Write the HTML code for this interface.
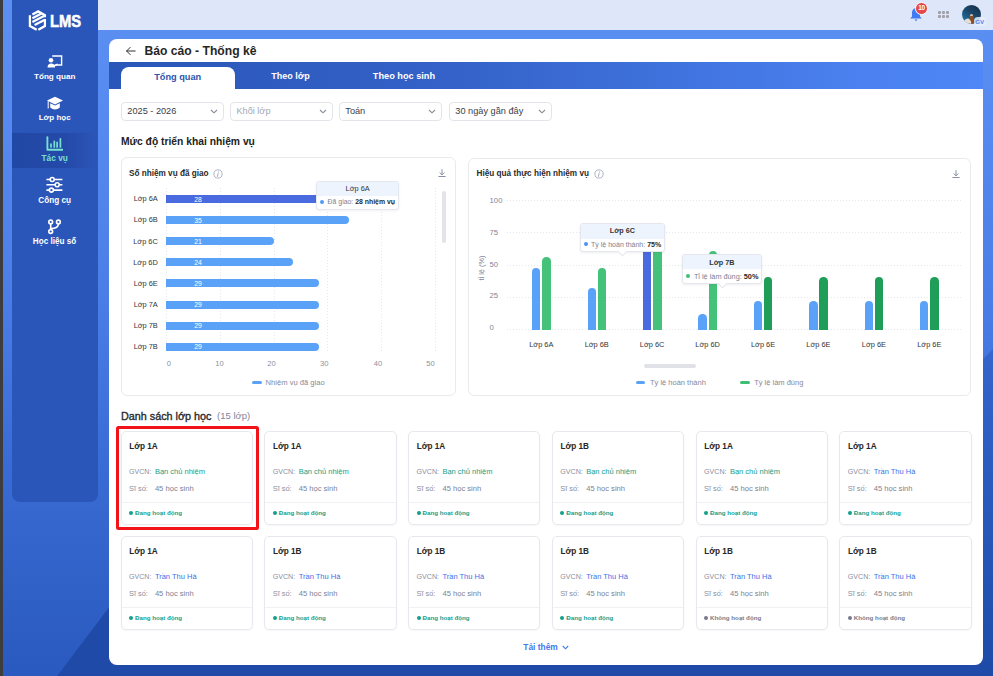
<!DOCTYPE html><html><head><meta charset="utf-8"><style>
*{box-sizing:border-box;margin:0;padding:0}
html,body{width:993px;height:676px;overflow:hidden}
body{font-family:"Liberation Sans",sans-serif;position:relative;background:#2f62c8}
.a{position:absolute}
.t{position:absolute;line-height:1;white-space:nowrap}
</style></head><body>
<div class="a" style="left:0;top:0;width:993px;height:676px;background:linear-gradient(180deg,#5c8ff1 0px,#578af0 120px,#4a7ee6 300px,#3a6dd6 450px,#2f60c6 600px,#2a5abf 676px)"></div>
<div class="a" style="left:0;top:0;width:993px;height:676px;background:linear-gradient(180deg,#3969d0 0,#3969d0 345px,#3464ca 362px,#2a59bd 500px,#2150ae 620px,#1f4aa7 676px);clip-path:polygon(993px 349px,993px 676px,666px 676px)"></div>
<div class="a" style="left:0;top:0;width:993px;height:676px;background:#1f4aa7;clip-path:polygon(57.2px 676px,122.9px 589px,982px 589px,982px 676px)"></div>
<div class="a" style="left:0;top:0;width:3px;height:676px;background:#3d3d3d"></div>
<div class="a" style="left:11.5px;top:0;width:86.5px;height:501.8px;background:#2b56b9;border-radius:0 0 8px 8px"></div>
<div class="a" style="left:98px;top:0;width:895px;height:30px;background:#dde7f9"></div>
<div class="a" style="left:108.5px;top:39px;width:874.9px;height:625.5px;background:#fff;border-radius:8px"></div>
<svg class="a" style="left:124px;top:45px" width="14" height="12" viewBox="0 0 14 12"><path d="M11.2 6H2.6M6.2 2.4L2.6 6L6.2 9.6" stroke="#333" stroke-width="1" fill="none" stroke-linecap="round" stroke-linejoin="round"/></svg>
<div class="t" style="left:144.50px;top:44.82px;font-size:12.15px;font-weight:bold;color:#262626;">Báo cáo - Thống kê</div>
<div class="a" style="left:108.5px;top:62px;width:874.9px;height:27px;background:linear-gradient(90deg,#2b56b9 0%,#3462c8 40%,#4a80ef 85%,#4f87f6 100%)"></div>
<div class="a" style="left:121px;top:66.5px;width:113.5px;height:22.5px;background:#fff;border-radius:8px 8px 0 0"></div>
<div class="t" style="left:177.70px;top:73.30px;font-size:9.2px;font-weight:bold;color:#2a55ad;transform:translateX(-50%);">Tổng quan</div>
<div class="t" style="left:271.30px;top:72.10px;font-size:9.0px;font-weight:bold;color:#fff;">Theo lớp</div>
<div class="t" style="left:372.80px;top:72.00px;font-size:9.2px;font-weight:bold;color:#fff;">Theo học sinh</div>
<div class="a" style="left:121.3px;top:101.8px;width:102.3px;height:19.4px;border:1px solid #e3e5ea;border-radius:4px"></div>
<div class="t" style="left:127.30px;top:107.10px;font-size:9.2px;font-weight:normal;color:#3a3d48;">2025 - 2026</div>
<svg class="a" style="left:210.3px;top:109px" width="8" height="5" viewBox="0 0 8 5"><path d="M1 1L4 3.8L7 1" stroke="#868b9c" stroke-width="1.15" fill="none"/></svg>
<div class="a" style="left:230.4px;top:101.8px;width:102.3px;height:19.4px;border:1px solid #e3e5ea;border-radius:4px"></div>
<div class="t" style="left:236.40px;top:107.10px;font-size:9.2px;font-weight:normal;color:#a3a7b4;">Khối lớp</div>
<svg class="a" style="left:319.4px;top:109px" width="8" height="5" viewBox="0 0 8 5"><path d="M1 1L4 3.8L7 1" stroke="#868b9c" stroke-width="1.15" fill="none"/></svg>
<div class="a" style="left:339.3px;top:101.8px;width:102.3px;height:19.4px;border:1px solid #e3e5ea;border-radius:4px"></div>
<div class="t" style="left:345.30px;top:107.10px;font-size:9.2px;font-weight:normal;color:#3a3d48;">Toán</div>
<svg class="a" style="left:428.3px;top:109px" width="8" height="5" viewBox="0 0 8 5"><path d="M1 1L4 3.8L7 1" stroke="#868b9c" stroke-width="1.15" fill="none"/></svg>
<div class="a" style="left:449.3px;top:101.8px;width:102.3px;height:19.4px;border:1px solid #e3e5ea;border-radius:4px"></div>
<div class="t" style="left:455.30px;top:107.10px;font-size:9.2px;font-weight:normal;color:#3a3d48;">30 ngày gần đây</div>
<svg class="a" style="left:538.3px;top:109px" width="8" height="5" viewBox="0 0 8 5"><path d="M1 1L4 3.8L7 1" stroke="#868b9c" stroke-width="1.15" fill="none"/></svg>
<div class="t" style="left:121.00px;top:137.05px;font-size:10.3px;font-weight:bold;color:#222;">Mức độ triển khai nhiệm vụ</div>
<div class="a" style="left:121.3px;top:157.4px;width:334.8px;height:239px;border:1px solid #e8eaee;border-radius:6px"></div>
<div class="t" style="left:129.00px;top:169.50px;font-size:8.2px;font-weight:bold;color:#2a2a2a;">Số nhiệm vụ đã giao</div>
<svg class="a" style="left:212.9px;top:168.9px" width="10" height="10" viewBox="0 0 10 10"><circle cx="5" cy="5" r="4.1" stroke="#9ea3b6" stroke-width="0.8" fill="none"/><circle cx="5.5" cy="3" r="0.5" fill="#8f95a8"/><path d="M4.4 7.4L5.1 4.6" stroke="#8f95a8" stroke-width="0.8" stroke-linecap="round"/></svg>
<svg class="a" style="left:436.5px;top:168.3px" width="10" height="10" viewBox="0 0 10 10"><path d="M5 1.3V6.8M2.6 4.5L5 6.9L7.4 4.5M1.4 8.5H8.6" stroke="#8a90a5" stroke-width="1" fill="none"/></svg>
<div class="a" style="left:166.1px;top:188px;width:1px;height:165px;background:repeating-linear-gradient(180deg,#e5e8ec 0 1.5px,transparent 1.5px 3px)"></div>
<div class="a" style="left:219.9px;top:188px;width:1px;height:165px;background:repeating-linear-gradient(180deg,#e5e8ec 0 1.5px,transparent 1.5px 3px)"></div>
<div class="a" style="left:273.6px;top:188px;width:1px;height:165px;background:repeating-linear-gradient(180deg,#e5e8ec 0 1.5px,transparent 1.5px 3px)"></div>
<div class="a" style="left:327.3px;top:188px;width:1px;height:165px;background:repeating-linear-gradient(180deg,#e5e8ec 0 1.5px,transparent 1.5px 3px)"></div>
<div class="a" style="left:381.0px;top:188px;width:1px;height:165px;background:repeating-linear-gradient(180deg,#e5e8ec 0 1.5px,transparent 1.5px 3px)"></div>
<div class="a" style="left:434.8px;top:188px;width:1px;height:165px;background:repeating-linear-gradient(180deg,#e5e8ec 0 1.5px,transparent 1.5px 3px)"></div>
<div class="a" style="left:441.5px;top:191.3px;width:4.3px;height:51.3px;background:#e2e4e9;border-radius:2px"></div>
<div class="a" style="left:166px;top:195.0px;width:152.0px;height:8px;background:#4a6be0;border-radius:0"></div>
<div class="t" style="left:157.80px;top:195.30px;font-size:7.4px;font-weight:normal;color:#333;transform:translateX(-100%);">Lớp 6A</div>
<div class="t" style="left:194.20px;top:196.70px;font-size:6.8px;font-weight:normal;color:#fff;">28</div>
<div class="a" style="left:166px;top:216.1px;width:182.7px;height:8px;background:#5aa2f8;border-radius:0 4px 4px 0"></div>
<div class="t" style="left:157.80px;top:216.40px;font-size:7.4px;font-weight:normal;color:#333;transform:translateX(-100%);">Lớp 6B</div>
<div class="t" style="left:194.20px;top:217.80px;font-size:6.8px;font-weight:normal;color:#fff;">35</div>
<div class="a" style="left:166px;top:237.2px;width:107.7px;height:8px;background:#5aa2f8;border-radius:0 4px 4px 0"></div>
<div class="t" style="left:157.80px;top:237.50px;font-size:7.4px;font-weight:normal;color:#333;transform:translateX(-100%);">Lớp 6C</div>
<div class="t" style="left:194.20px;top:238.90px;font-size:6.8px;font-weight:normal;color:#fff;">21</div>
<div class="a" style="left:166px;top:258.3px;width:126.7px;height:8px;background:#5aa2f8;border-radius:0 4px 4px 0"></div>
<div class="t" style="left:157.80px;top:258.60px;font-size:7.4px;font-weight:normal;color:#333;transform:translateX(-100%);">Lớp 6D</div>
<div class="t" style="left:194.20px;top:260.00px;font-size:6.8px;font-weight:normal;color:#fff;">24</div>
<div class="a" style="left:166px;top:279.4px;width:153.3px;height:8px;background:#5aa2f8;border-radius:0 4px 4px 0"></div>
<div class="t" style="left:157.80px;top:279.70px;font-size:7.4px;font-weight:normal;color:#333;transform:translateX(-100%);">Lớp 6E</div>
<div class="t" style="left:194.20px;top:281.10px;font-size:6.8px;font-weight:normal;color:#fff;">29</div>
<div class="a" style="left:166px;top:300.5px;width:153.3px;height:8px;background:#5aa2f8;border-radius:0 4px 4px 0"></div>
<div class="t" style="left:157.80px;top:300.80px;font-size:7.4px;font-weight:normal;color:#333;transform:translateX(-100%);">Lớp 7A</div>
<div class="t" style="left:194.20px;top:302.20px;font-size:6.8px;font-weight:normal;color:#fff;">29</div>
<div class="a" style="left:166px;top:321.6px;width:153.3px;height:8px;background:#5aa2f8;border-radius:0 4px 4px 0"></div>
<div class="t" style="left:157.80px;top:321.90px;font-size:7.4px;font-weight:normal;color:#333;transform:translateX(-100%);">Lớp 7B</div>
<div class="t" style="left:194.20px;top:323.30px;font-size:6.8px;font-weight:normal;color:#fff;">29</div>
<div class="a" style="left:166px;top:342.7px;width:153.3px;height:8px;background:#5aa2f8;border-radius:0 4px 4px 0"></div>
<div class="t" style="left:157.80px;top:343.00px;font-size:7.4px;font-weight:normal;color:#333;transform:translateX(-100%);">Lớp 7B</div>
<div class="t" style="left:194.20px;top:344.40px;font-size:6.8px;font-weight:normal;color:#fff;">29</div>
<div class="t" style="left:168.80px;top:359.60px;font-size:7.6px;font-weight:normal;color:#8b90a0;transform:translateX(-50%);">0</div>
<div class="t" style="left:219.40px;top:359.60px;font-size:7.6px;font-weight:normal;color:#8b90a0;transform:translateX(-50%);">10</div>
<div class="t" style="left:271.60px;top:359.60px;font-size:7.6px;font-weight:normal;color:#8b90a0;transform:translateX(-50%);">20</div>
<div class="t" style="left:324.20px;top:359.60px;font-size:7.6px;font-weight:normal;color:#8b90a0;transform:translateX(-50%);">30</div>
<div class="t" style="left:378.00px;top:359.60px;font-size:7.6px;font-weight:normal;color:#8b90a0;transform:translateX(-50%);">40</div>
<div class="t" style="left:430.60px;top:359.60px;font-size:7.6px;font-weight:normal;color:#8b90a0;transform:translateX(-50%);">50</div>
<div class="a" style="left:251.6px;top:380.8px;width:10px;height:3px;background:#5aa2f8;border-radius:2px"></div>
<div class="t" style="left:265.60px;top:378.50px;font-size:7.6px;font-weight:normal;color:#858a9a;">Nhiệm vụ đã giao</div>
<div class="a" style="left:316.3px;top:181.3px;width:83px;height:29px;background:#fff;border:1px solid #e4e7ee;border-radius:3px;box-shadow:0 1px 3px rgba(0,0,0,.06);overflow:hidden"><div style="height:14px;background:#edf4fe"></div></div>
<div class="t" style="left:357.70px;top:185.30px;font-size:7.4px;font-weight:normal;color:#333;transform:translateX(-50%);">Lớp 6A</div>
<div class="a" style="left:320px;top:200.3px;width:4px;height:4px;border-radius:50%;background:#4f9cf7"></div>
<div class="t" style="left:327.6px;top:198.8px;font-size:6.9px;color:#7c8191">Đã giao: <b style="color:#2a2a2a">28 nhiệm vụ</b></div>
<div class="a" style="left:468.3px;top:157.6px;width:502.3px;height:238.6px;border:1px solid #e8eaee;border-radius:6px"></div>
<div class="t" style="left:476.60px;top:169.50px;font-size:8.2px;font-weight:bold;color:#2a2a2a;">Hiệu quả thực hiện nhiệm vụ</div>
<svg class="a" style="left:593.8px;top:169.0px" width="10" height="10" viewBox="0 0 10 10"><circle cx="5" cy="5" r="4.1" stroke="#9ea3b6" stroke-width="0.8" fill="none"/><circle cx="5.5" cy="3" r="0.5" fill="#8f95a8"/><path d="M4.4 7.4L5.1 4.6" stroke="#8f95a8" stroke-width="0.8" stroke-linecap="round"/></svg>
<svg class="a" style="left:951.3px;top:169px" width="10" height="10" viewBox="0 0 10 10"><path d="M5 1.3V6.8M2.6 4.5L5 6.9L7.4 4.5M1.4 8.5H8.6" stroke="#8a90a5" stroke-width="1" fill="none"/></svg>
<div class="a" style="left:507px;top:200.2px;width:456px;height:1px;background:repeating-linear-gradient(90deg,#e5e8ec 0 1.5px,transparent 1.5px 3px)"></div>
<div class="t" style="left:489.60px;top:197.15px;font-size:7.7px;font-weight:normal;color:#80859a;">100</div>
<div class="a" style="left:507px;top:232.4px;width:456px;height:1px;background:repeating-linear-gradient(90deg,#e5e8ec 0 1.5px,transparent 1.5px 3px)"></div>
<div class="t" style="left:489.60px;top:228.85px;font-size:7.7px;font-weight:normal;color:#80859a;">75</div>
<div class="a" style="left:507px;top:264.6px;width:456px;height:1px;background:repeating-linear-gradient(90deg,#e5e8ec 0 1.5px,transparent 1.5px 3px)"></div>
<div class="t" style="left:489.60px;top:260.55px;font-size:7.7px;font-weight:normal;color:#80859a;">50</div>
<div class="a" style="left:507px;top:296.8px;width:456px;height:1px;background:repeating-linear-gradient(90deg,#e5e8ec 0 1.5px,transparent 1.5px 3px)"></div>
<div class="t" style="left:489.60px;top:292.25px;font-size:7.7px;font-weight:normal;color:#80859a;">25</div>
<div class="a" style="left:507px;top:329.1px;width:456px;height:1px;background:repeating-linear-gradient(90deg,#e5e8ec 0 1.5px,transparent 1.5px 3px)"></div>
<div class="t" style="left:489.60px;top:323.95px;font-size:7.7px;font-weight:normal;color:#80859a;">0</div>
<div class="t" style="left:482.2px;top:268px;font-size:7.4px;color:#858a9c;transform:translate(-50%,-50%) rotate(-90deg)">tỉ lệ (%)</div>
<div class="a" style="left:532.1px;top:268.3px;width:8.4px;height:61.3px;background:#5aa2f8;border-radius:4.2px 4.2px 0 0"></div>
<div class="a" style="left:542.2px;top:257px;width:8.6px;height:72.6px;background:#45c27a;border-radius:4.3px 4.3px 0 0"></div>
<div class="t" style="left:541.30px;top:341.00px;font-size:7.4px;font-weight:normal;color:#333;transform:translateX(-50%);">Lớp 6A</div>
<div class="a" style="left:587.5px;top:288.4px;width:8.4px;height:41.2px;background:#5aa2f8;border-radius:4.2px 4.2px 0 0"></div>
<div class="a" style="left:597.6px;top:267.8px;width:8.6px;height:61.8px;background:#45c27a;border-radius:4.3px 4.3px 0 0"></div>
<div class="t" style="left:596.73px;top:341.00px;font-size:7.4px;font-weight:normal;color:#333;transform:translateX(-50%);">Lớp 6B</div>
<div class="a" style="left:643.0px;top:240px;width:8.4px;height:89.6px;background:#4a6be0;border-radius:0"></div>
<div class="a" style="left:653.1px;top:240px;width:8.6px;height:89.6px;background:#45c27a;border-radius:0"></div>
<div class="t" style="left:652.16px;top:341.00px;font-size:7.4px;font-weight:normal;color:#333;transform:translateX(-50%);">Lớp 6C</div>
<div class="a" style="left:698.4px;top:314.1px;width:8.4px;height:15.5px;background:#5aa2f8;border-radius:4.2px 4.2px 0 0"></div>
<div class="a" style="left:708.5px;top:250.5px;width:8.6px;height:79.1px;background:#45c27a;border-radius:4.3px 4.3px 0 0"></div>
<div class="t" style="left:707.59px;top:341.00px;font-size:7.4px;font-weight:normal;color:#333;transform:translateX(-50%);">Lớp 6D</div>
<div class="a" style="left:753.8px;top:301px;width:8.4px;height:28.6px;background:#5aa2f8;border-radius:4.2px 4.2px 0 0"></div>
<div class="a" style="left:763.9px;top:277.2px;width:8.6px;height:52.4px;background:#1e9e58;border-radius:4.3px 4.3px 0 0"></div>
<div class="t" style="left:763.02px;top:341.00px;font-size:7.4px;font-weight:normal;color:#333;transform:translateX(-50%);">Lớp 6E</div>
<div class="a" style="left:809.2px;top:301px;width:8.4px;height:28.6px;background:#5aa2f8;border-radius:4.2px 4.2px 0 0"></div>
<div class="a" style="left:819.4px;top:277.2px;width:8.6px;height:52.4px;background:#1e9e58;border-radius:4.3px 4.3px 0 0"></div>
<div class="t" style="left:818.45px;top:341.00px;font-size:7.4px;font-weight:normal;color:#333;transform:translateX(-50%);">Lớp 6E</div>
<div class="a" style="left:864.7px;top:301px;width:8.4px;height:28.6px;background:#5aa2f8;border-radius:4.2px 4.2px 0 0"></div>
<div class="a" style="left:874.8px;top:277.2px;width:8.6px;height:52.4px;background:#1e9e58;border-radius:4.3px 4.3px 0 0"></div>
<div class="t" style="left:873.88px;top:341.00px;font-size:7.4px;font-weight:normal;color:#333;transform:translateX(-50%);">Lớp 6E</div>
<div class="a" style="left:920.1px;top:301px;width:8.4px;height:28.6px;background:#5aa2f8;border-radius:4.2px 4.2px 0 0"></div>
<div class="a" style="left:930.2px;top:277.2px;width:8.6px;height:52.4px;background:#1e9e58;border-radius:4.3px 4.3px 0 0"></div>
<div class="t" style="left:929.31px;top:341.00px;font-size:7.4px;font-weight:normal;color:#333;transform:translateX(-50%);">Lớp 6E</div>
<div class="a" style="left:644px;top:364.2px;width:51.7px;height:4px;background:#e0e2e7;border-radius:2px"></div>
<div class="a" style="left:635.7px;top:380.7px;width:9.7px;height:3px;background:#5aa2f8;border-radius:2px"></div>
<div class="t" style="left:650.00px;top:378.55px;font-size:7.5px;font-weight:normal;color:#858a9a;">Tỷ lệ hoàn thành</div>
<div class="a" style="left:740.3px;top:380.7px;width:9.7px;height:3px;background:#3fbf74;border-radius:2px"></div>
<div class="t" style="left:754.20px;top:378.55px;font-size:7.5px;font-weight:normal;color:#858a9a;">Tỷ lệ làm đúng</div>
<div class="a" style="left:579.6px;top:223.3px;width:85.8px;height:28.6px;background:#fff;border:1px solid #e4e7ee;border-radius:3px;box-shadow:0 1px 3px rgba(0,0,0,.07);overflow:hidden"><div style="height:14.4px;background:#edf4fe"></div></div>
<div class="a" style="left:618.8px;top:248.4px;width:7px;height:7px;background:#fff;transform:rotate(45deg);border-right:1px solid #e4e7ee;border-bottom:1px solid #e4e7ee"></div>
<div class="t" style="left:622.30px;top:227.00px;font-size:7.2px;font-weight:bold;color:#333;transform:translateX(-50%);">Lớp 6C</div>
<div class="a" style="left:583.6px;top:242.1px;width:4px;height:4px;border-radius:50%;background:#4f8ff7"></div>
<div class="t" style="left:591.1px;top:240.8px;font-size:7px;color:#7c8191">Tỷ lệ hoàn thành: <b style="color:#2a2a2a">75%</b></div>
<div class="a" style="left:682.4px;top:254.1px;width:79.2px;height:29.5px;background:#fff;border:1px solid #e4e7ee;border-radius:3px;box-shadow:0 1px 3px rgba(0,0,0,.07);overflow:hidden"><div style="height:14.4px;background:#edf4fe"></div></div>
<div class="a" style="left:718.5px;top:280.1px;width:7px;height:7px;background:#fff;transform:rotate(45deg);border-right:1px solid #e4e7ee;border-bottom:1px solid #e4e7ee"></div>
<div class="t" style="left:721.80px;top:258.50px;font-size:7.2px;font-weight:bold;color:#333;transform:translateX(-50%);">Lớp 7B</div>
<div class="a" style="left:686.4px;top:273.8px;width:4px;height:4px;border-radius:50%;background:#3fbf74"></div>
<div class="t" style="left:693.9px;top:272.5px;font-size:7.3px;color:#7c8191">Tỉ lệ làm đúng: <b style="color:#2a2a2a">50%</b></div>
<div class="t" style="left:121.00px;top:410.80px;font-size:10.8px;font-weight:normal;color:#2a2a2a;-webkit-text-stroke:0.35px #2a2a2a">Danh sách lớp học</div>
<div class="t" style="left:217.10px;top:411.35px;font-size:9.5px;font-weight:normal;color:#7f83a0;">(15 lớp)</div>
<div class="a" style="left:120.6px;top:431.4px;width:132.2px;height:93.6px;border:1px solid #e6e8ed;border-radius:5px;box-shadow:0 1px 2px rgba(20,30,60,.04)"></div>
<div class="a" style="left:121.6px;top:502.2px;width:130.2px;height:1px;background:#f0f1f4"></div>
<div class="t" style="left:129.20px;top:442.70px;font-size:8.2px;font-weight:bold;color:#262626;">Lớp 1A</div>
<div class="t" style="left:129.00px;top:468.85px;font-size:7.1px;font-weight:normal;color:#8a8ea0;">GVCN:</div>
<div class="t" style="left:154.90px;top:467.95px;font-size:7.5px;font-weight:normal;color:#16a08a;">Bạn chủ nhiệm</div>
<div class="t" style="left:129.00px;top:484.90px;font-size:7.4px;font-weight:normal;color:#8a8ea0;">Sĩ số:</div>
<div class="t" style="left:154.90px;top:484.80px;font-size:7.6px;font-weight:normal;color:#7d8192;">45 học sinh</div>
<div class="a" style="left:129px;top:511px;width:4px;height:4px;border-radius:50%;background:#14a08b"></div>
<div class="t" style="left:135.00px;top:510.30px;font-size:6.2px;font-weight:bold;color:#14a08b;">Đang hoạt động</div>
<div class="a" style="left:264.4px;top:431.4px;width:132.2px;height:93.6px;border:1px solid #e6e8ed;border-radius:5px;box-shadow:0 1px 2px rgba(20,30,60,.04)"></div>
<div class="a" style="left:265.4px;top:502.2px;width:130.2px;height:1px;background:#f0f1f4"></div>
<div class="t" style="left:272.96px;top:442.70px;font-size:8.2px;font-weight:bold;color:#262626;">Lớp 1A</div>
<div class="t" style="left:272.76px;top:468.85px;font-size:7.1px;font-weight:normal;color:#8a8ea0;">GVCN:</div>
<div class="t" style="left:298.66px;top:467.95px;font-size:7.5px;font-weight:normal;color:#16a08a;">Bạn chủ nhiệm</div>
<div class="t" style="left:272.76px;top:484.90px;font-size:7.4px;font-weight:normal;color:#8a8ea0;">Sĩ số:</div>
<div class="t" style="left:298.66px;top:484.80px;font-size:7.6px;font-weight:normal;color:#7d8192;">45 học sinh</div>
<div class="a" style="left:273px;top:511px;width:4px;height:4px;border-radius:50%;background:#14a08b"></div>
<div class="t" style="left:278.76px;top:510.30px;font-size:6.2px;font-weight:bold;color:#14a08b;">Đang hoạt động</div>
<div class="a" style="left:408.1px;top:431.4px;width:132.2px;height:93.6px;border:1px solid #e6e8ed;border-radius:5px;box-shadow:0 1px 2px rgba(20,30,60,.04)"></div>
<div class="a" style="left:409.1px;top:502.2px;width:130.2px;height:1px;background:#f0f1f4"></div>
<div class="t" style="left:416.72px;top:442.70px;font-size:8.2px;font-weight:bold;color:#262626;">Lớp 1A</div>
<div class="t" style="left:416.52px;top:468.85px;font-size:7.1px;font-weight:normal;color:#8a8ea0;">GVCN:</div>
<div class="t" style="left:442.42px;top:467.95px;font-size:7.5px;font-weight:normal;color:#16a08a;">Bạn chủ nhiệm</div>
<div class="t" style="left:416.52px;top:484.90px;font-size:7.4px;font-weight:normal;color:#8a8ea0;">Sĩ số:</div>
<div class="t" style="left:442.42px;top:484.80px;font-size:7.6px;font-weight:normal;color:#7d8192;">45 học sinh</div>
<div class="a" style="left:417px;top:511px;width:4px;height:4px;border-radius:50%;background:#14a08b"></div>
<div class="t" style="left:422.52px;top:510.30px;font-size:6.2px;font-weight:bold;color:#14a08b;">Đang hoạt động</div>
<div class="a" style="left:551.9px;top:431.4px;width:132.2px;height:93.6px;border:1px solid #e6e8ed;border-radius:5px;box-shadow:0 1px 2px rgba(20,30,60,.04)"></div>
<div class="a" style="left:552.9px;top:502.2px;width:130.2px;height:1px;background:#f0f1f4"></div>
<div class="t" style="left:560.48px;top:442.70px;font-size:8.2px;font-weight:bold;color:#262626;">Lớp 1B</div>
<div class="t" style="left:560.28px;top:468.85px;font-size:7.1px;font-weight:normal;color:#8a8ea0;">GVCN:</div>
<div class="t" style="left:586.18px;top:467.95px;font-size:7.5px;font-weight:normal;color:#16a08a;">Bạn chủ nhiệm</div>
<div class="t" style="left:560.28px;top:484.90px;font-size:7.4px;font-weight:normal;color:#8a8ea0;">Sĩ số:</div>
<div class="t" style="left:586.18px;top:484.80px;font-size:7.6px;font-weight:normal;color:#7d8192;">45 học sinh</div>
<div class="a" style="left:560px;top:511px;width:4px;height:4px;border-radius:50%;background:#14a08b"></div>
<div class="t" style="left:566.28px;top:510.30px;font-size:6.2px;font-weight:bold;color:#14a08b;">Đang hoạt động</div>
<div class="a" style="left:695.6px;top:431.4px;width:132.2px;height:93.6px;border:1px solid #e6e8ed;border-radius:5px;box-shadow:0 1px 2px rgba(20,30,60,.04)"></div>
<div class="a" style="left:696.6px;top:502.2px;width:130.2px;height:1px;background:#f0f1f4"></div>
<div class="t" style="left:704.24px;top:442.70px;font-size:8.2px;font-weight:bold;color:#262626;">Lớp 1A</div>
<div class="t" style="left:704.04px;top:468.85px;font-size:7.1px;font-weight:normal;color:#8a8ea0;">GVCN:</div>
<div class="t" style="left:729.94px;top:467.95px;font-size:7.5px;font-weight:normal;color:#16a08a;">Bạn chủ nhiệm</div>
<div class="t" style="left:704.04px;top:484.90px;font-size:7.4px;font-weight:normal;color:#8a8ea0;">Sĩ số:</div>
<div class="t" style="left:729.94px;top:484.80px;font-size:7.6px;font-weight:normal;color:#7d8192;">45 học sinh</div>
<div class="a" style="left:704px;top:511px;width:4px;height:4px;border-radius:50%;background:#14a08b"></div>
<div class="t" style="left:710.04px;top:510.30px;font-size:6.2px;font-weight:bold;color:#14a08b;">Đang hoạt động</div>
<div class="a" style="left:839.4px;top:431.4px;width:132.2px;height:93.6px;border:1px solid #e6e8ed;border-radius:5px;box-shadow:0 1px 2px rgba(20,30,60,.04)"></div>
<div class="a" style="left:840.4px;top:502.2px;width:130.2px;height:1px;background:#f0f1f4"></div>
<div class="t" style="left:848.00px;top:442.70px;font-size:8.2px;font-weight:bold;color:#262626;">Lớp 1A</div>
<div class="t" style="left:847.80px;top:468.85px;font-size:7.1px;font-weight:normal;color:#8a8ea0;">GVCN:</div>
<div class="t" style="left:873.70px;top:467.95px;font-size:7.5px;font-weight:normal;color:#3c72e6;">Trần Thu Hà</div>
<div class="t" style="left:847.80px;top:484.90px;font-size:7.4px;font-weight:normal;color:#8a8ea0;">Sĩ số:</div>
<div class="t" style="left:873.70px;top:484.80px;font-size:7.6px;font-weight:normal;color:#7d8192;">45 học sinh</div>
<div class="a" style="left:848px;top:511px;width:4px;height:4px;border-radius:50%;background:#14a08b"></div>
<div class="t" style="left:853.80px;top:510.30px;font-size:6.2px;font-weight:bold;color:#14a08b;">Đang hoạt động</div>
<div class="a" style="left:120.6px;top:536.2px;width:132.2px;height:93.6px;border:1px solid #e6e8ed;border-radius:5px;box-shadow:0 1px 2px rgba(20,30,60,.04)"></div>
<div class="a" style="left:121.6px;top:607.0px;width:130.2px;height:1px;background:#f0f1f4"></div>
<div class="t" style="left:129.20px;top:547.50px;font-size:8.2px;font-weight:bold;color:#262626;">Lớp 1A</div>
<div class="t" style="left:129.00px;top:573.65px;font-size:7.1px;font-weight:normal;color:#8a8ea0;">GVCN:</div>
<div class="t" style="left:154.90px;top:572.75px;font-size:7.5px;font-weight:normal;color:#3c72e6;">Trần Thu Hà</div>
<div class="t" style="left:129.00px;top:589.70px;font-size:7.4px;font-weight:normal;color:#8a8ea0;">Sĩ số:</div>
<div class="t" style="left:154.90px;top:589.60px;font-size:7.6px;font-weight:normal;color:#7d8192;">45 học sinh</div>
<div class="a" style="left:129px;top:616px;width:4px;height:4px;border-radius:50%;background:#14a08b"></div>
<div class="t" style="left:135.00px;top:615.10px;font-size:6.2px;font-weight:bold;color:#14a08b;">Đang hoạt động</div>
<div class="a" style="left:264.4px;top:536.2px;width:132.2px;height:93.6px;border:1px solid #e6e8ed;border-radius:5px;box-shadow:0 1px 2px rgba(20,30,60,.04)"></div>
<div class="a" style="left:265.4px;top:607.0px;width:130.2px;height:1px;background:#f0f1f4"></div>
<div class="t" style="left:272.96px;top:547.50px;font-size:8.2px;font-weight:bold;color:#262626;">Lớp 1B</div>
<div class="t" style="left:272.76px;top:573.65px;font-size:7.1px;font-weight:normal;color:#8a8ea0;">GVCN:</div>
<div class="t" style="left:298.66px;top:572.75px;font-size:7.5px;font-weight:normal;color:#3c72e6;">Trần Thu Hà</div>
<div class="t" style="left:272.76px;top:589.70px;font-size:7.4px;font-weight:normal;color:#8a8ea0;">Sĩ số:</div>
<div class="t" style="left:298.66px;top:589.60px;font-size:7.6px;font-weight:normal;color:#7d8192;">45 học sinh</div>
<div class="a" style="left:273px;top:616px;width:4px;height:4px;border-radius:50%;background:#14a08b"></div>
<div class="t" style="left:278.76px;top:615.10px;font-size:6.2px;font-weight:bold;color:#14a08b;">Đang hoạt động</div>
<div class="a" style="left:408.1px;top:536.2px;width:132.2px;height:93.6px;border:1px solid #e6e8ed;border-radius:5px;box-shadow:0 1px 2px rgba(20,30,60,.04)"></div>
<div class="a" style="left:409.1px;top:607.0px;width:130.2px;height:1px;background:#f0f1f4"></div>
<div class="t" style="left:416.72px;top:547.50px;font-size:8.2px;font-weight:bold;color:#262626;">Lớp 1B</div>
<div class="t" style="left:416.52px;top:573.65px;font-size:7.1px;font-weight:normal;color:#8a8ea0;">GVCN:</div>
<div class="t" style="left:442.42px;top:572.75px;font-size:7.5px;font-weight:normal;color:#3c72e6;">Trần Thu Hà</div>
<div class="t" style="left:416.52px;top:589.70px;font-size:7.4px;font-weight:normal;color:#8a8ea0;">Sĩ số:</div>
<div class="t" style="left:442.42px;top:589.60px;font-size:7.6px;font-weight:normal;color:#7d8192;">45 học sinh</div>
<div class="a" style="left:417px;top:616px;width:4px;height:4px;border-radius:50%;background:#14a08b"></div>
<div class="t" style="left:422.52px;top:615.10px;font-size:6.2px;font-weight:bold;color:#14a08b;">Đang hoạt động</div>
<div class="a" style="left:551.9px;top:536.2px;width:132.2px;height:93.6px;border:1px solid #e6e8ed;border-radius:5px;box-shadow:0 1px 2px rgba(20,30,60,.04)"></div>
<div class="a" style="left:552.9px;top:607.0px;width:130.2px;height:1px;background:#f0f1f4"></div>
<div class="t" style="left:560.48px;top:547.50px;font-size:8.2px;font-weight:bold;color:#262626;">Lớp 1B</div>
<div class="t" style="left:560.28px;top:573.65px;font-size:7.1px;font-weight:normal;color:#8a8ea0;">GVCN:</div>
<div class="t" style="left:586.18px;top:572.75px;font-size:7.5px;font-weight:normal;color:#3c72e6;">Trần Thu Hà</div>
<div class="t" style="left:560.28px;top:589.70px;font-size:7.4px;font-weight:normal;color:#8a8ea0;">Sĩ số:</div>
<div class="t" style="left:586.18px;top:589.60px;font-size:7.6px;font-weight:normal;color:#7d8192;">45 học sinh</div>
<div class="a" style="left:560px;top:616px;width:4px;height:4px;border-radius:50%;background:#14a08b"></div>
<div class="t" style="left:566.28px;top:615.10px;font-size:6.2px;font-weight:bold;color:#14a08b;">Đang hoạt động</div>
<div class="a" style="left:695.6px;top:536.2px;width:132.2px;height:93.6px;border:1px solid #e6e8ed;border-radius:5px;box-shadow:0 1px 2px rgba(20,30,60,.04)"></div>
<div class="a" style="left:696.6px;top:607.0px;width:130.2px;height:1px;background:#f0f1f4"></div>
<div class="t" style="left:704.24px;top:547.50px;font-size:8.2px;font-weight:bold;color:#262626;">Lớp 1B</div>
<div class="t" style="left:704.04px;top:573.65px;font-size:7.1px;font-weight:normal;color:#8a8ea0;">GVCN:</div>
<div class="t" style="left:729.94px;top:572.75px;font-size:7.5px;font-weight:normal;color:#3c72e6;">Trần Thu Hà</div>
<div class="t" style="left:704.04px;top:589.70px;font-size:7.4px;font-weight:normal;color:#8a8ea0;">Sĩ số:</div>
<div class="t" style="left:729.94px;top:589.60px;font-size:7.6px;font-weight:normal;color:#7d8192;">45 học sinh</div>
<div class="a" style="left:704px;top:616px;width:4px;height:4px;border-radius:50%;background:#777b8c"></div>
<div class="t" style="left:710.04px;top:615.10px;font-size:6.2px;font-weight:bold;color:#777b8c;">Không hoạt động</div>
<div class="a" style="left:839.4px;top:536.2px;width:132.2px;height:93.6px;border:1px solid #e6e8ed;border-radius:5px;box-shadow:0 1px 2px rgba(20,30,60,.04)"></div>
<div class="a" style="left:840.4px;top:607.0px;width:130.2px;height:1px;background:#f0f1f4"></div>
<div class="t" style="left:848.00px;top:547.50px;font-size:8.2px;font-weight:bold;color:#262626;">Lớp 1B</div>
<div class="t" style="left:847.80px;top:573.65px;font-size:7.1px;font-weight:normal;color:#8a8ea0;">GVCN:</div>
<div class="t" style="left:873.70px;top:572.75px;font-size:7.5px;font-weight:normal;color:#3c72e6;">Trần Thu Hà</div>
<div class="t" style="left:847.80px;top:589.70px;font-size:7.4px;font-weight:normal;color:#8a8ea0;">Sĩ số:</div>
<div class="t" style="left:873.70px;top:589.60px;font-size:7.6px;font-weight:normal;color:#7d8192;">45 học sinh</div>
<div class="a" style="left:848px;top:616px;width:4px;height:4px;border-radius:50%;background:#777b8c"></div>
<div class="t" style="left:853.80px;top:615.10px;font-size:6.2px;font-weight:bold;color:#777b8c;">Không hoạt động</div>
<div class="a" style="left:116.4px;top:426.2px;width:142.2px;height:104px;border:3px solid #f2121a;border-radius:2.5px"></div>
<div class="t" style="left:523.30px;top:642.70px;font-size:8.4px;font-weight:bold;color:#4479ec;">Tải thêm</div>
<svg class="a" style="left:562px;top:644.5px" width="7" height="5" viewBox="0 0 7 5"><path d="M0.8 1L3.5 3.8L6.2 1" stroke="#4479ec" stroke-width="1.1" fill="none"/></svg>
<svg class="a" style="left:26px;top:9px" width="24" height="24" viewBox="0 0 24 24">
<g fill="none" stroke="#fff" stroke-width="2.25" stroke-linejoin="miter" stroke-linecap="butt">
<path d="M3.9 6.3V17.1L10.7 20.8"/>
<path d="M12.3 20.8L18.9 17V10"/>
<path d="M6.4 5.5L12.2 2.4L18.9 6.2V8.2"/>
<path d="M6.4 9.2L15.4 4.5"/>
<path d="M6.4 13L18.9 6.5"/>
<path d="M8.6 16L18.9 10.7"/>
</g>
</svg>
<div class="t" style="left:50.30px;top:12.50px;font-size:17.2px;font-weight:bold;color:#fff;transform:scaleX(0.86);transform-origin:0 0;-webkit-text-stroke:0.55px #fff">LMS</div>
<svg class="a" style="left:46px;top:53.5px" width="17" height="15" viewBox="0 0 17 15">
<path d="M6.2 2H15.6V11H9.6" fill="none" stroke="#fff" stroke-width="1.4"/>
<circle cx="5" cy="6.2" r="2.3" fill="#fff"/>
<path d="M1.5 13.6C1.5 10.6 3.2 9.4 5 9.4C6.4 9.4 7.6 10 8.4 10.8L11.4 9.4L12 10.4L8.9 12.4V13.6Z" fill="#fff"/>
</svg>
<div class="t" style="left:54.70px;top:72.55px;font-size:8.1px;font-weight:bold;color:#fff;transform:translateX(-50%);">Tổng quan</div>
<svg class="a" style="left:46px;top:95.5px" width="18" height="14" viewBox="0 0 18 14">
<path d="M9 0.8L17 4.6L9 8.4L1 4.6Z" fill="#fff"/>
<path d="M4.2 7.2V11.6C5.6 12.9 7.3 13.4 9 13.4C10.7 13.4 12.4 12.9 13.8 11.6V7.2L9 9.5Z" fill="#fff"/>
<path d="M2.2 5.2V10.6" stroke="#fff" stroke-width="1"/>
<path d="M1.4 12.2L2.2 9.8L3 12.2Z" fill="#fff"/>
</svg>
<div class="t" style="left:54.70px;top:113.70px;font-size:8.0px;font-weight:bold;color:#fff;transform:translateX(-50%);">Lớp học</div>
<div class="a" style="left:12px;top:133px;width:86px;height:35px;background:linear-gradient(90deg,#2248a6 0%,#2449a8 60%,rgba(36,73,168,0) 100%)"></div>
<svg class="a" style="left:44.8px;top:135.5px" width="18" height="17" viewBox="0 0 18 17">
<path d="M2.4 1.1V13.8H17.6" fill="none" stroke="#74e2cf" stroke-width="1.9" stroke-linecap="round" stroke-linejoin="round"/>
<path d="M6 8.1V11M9.3 5.3V11M12.1 6.4V11M15.4 2.8V11" stroke="#74e2cf" stroke-width="1.7" stroke-linecap="round"/>
</svg>
<div class="t" style="left:54.70px;top:154.25px;font-size:8.3px;font-weight:normal;color:#74e2cf;transform:translateX(-50%);font-weight:bold">Tác vụ</div>
<svg class="a" style="left:45px;top:176px" width="19" height="18" viewBox="0 0 19 18">
<g stroke="#fff" stroke-width="1.6" fill="none">
<path d="M1.4 3.5H5.2M9.2 3.5H17.4"/>
<path d="M1.4 8.8H10.2M14.2 8.8H17.4"/>
<path d="M1.4 14.1H4.4M8.4 14.1H17.4"/>
<circle cx="7.2" cy="3.5" r="2"/>
<circle cx="12.2" cy="8.8" r="2"/>
<circle cx="6.4" cy="14.1" r="2"/>
</g></svg>
<div class="t" style="left:54.70px;top:196.60px;font-size:8.2px;font-weight:bold;color:#fff;transform:translateX(-50%);">Công cụ</div>
<svg class="a" style="left:47px;top:217.5px" width="16" height="18" viewBox="0 0 16 18">
<g stroke="#fff" stroke-width="1.6" fill="none">
<circle cx="3.7" cy="4" r="1.9"/>
<circle cx="11.4" cy="4" r="1.9"/>
<circle cx="3.7" cy="13.5" r="1.9"/>
<path d="M3.7 5.9V11.6"/>
<path d="M11.4 5.9C11.4 9.2 8.6 10.4 3.9 10.6"/>
</g></svg>
<div class="t" style="left:54.50px;top:237.53px;font-size:8.15px;font-weight:bold;color:#fff;transform:translateX(-50%);">Học liệu số</div>
<svg class="a" style="left:909px;top:5px" width="14" height="18" viewBox="0 0 14 18">
<path d="M7 3.2C4.4 3.2 3 5.2 3 7.6V11.4L1.2 13.6H12.8L11 11.4V7.6C11 5.2 9.6 3.2 7 3.2Z" fill="#3f7bf2"/>
<path d="M5.4 14.4H8.6L7 16.2Z" fill="#3f7bf2"/>
</svg>
<div class="a" style="left:915.3px;top:2.2px;width:12.6px;height:12.6px;border-radius:50%;background:#e5484d;border:1.1px solid #fff"></div>
<div class="t" style="left:921.60px;top:5.35px;font-size:6.5px;font-weight:bold;color:#fff;transform:translateX(-50%);letter-spacing:-0.3px">10</div>
<div class="a" style="left:937.80px;top:10.60px;width:3.2px;height:3.2px;border-radius:1px;background:#a0a1ab"></div>
<div class="a" style="left:941.85px;top:10.60px;width:3.2px;height:3.2px;border-radius:1px;background:#a0a1ab"></div>
<div class="a" style="left:945.90px;top:10.60px;width:3.2px;height:3.2px;border-radius:1px;background:#a0a1ab"></div>
<div class="a" style="left:937.80px;top:14.90px;width:3.2px;height:3.2px;border-radius:1px;background:#a0a1ab"></div>
<div class="a" style="left:941.85px;top:14.90px;width:3.2px;height:3.2px;border-radius:1px;background:#a0a1ab"></div>
<div class="a" style="left:945.90px;top:14.90px;width:3.2px;height:3.2px;border-radius:1px;background:#a0a1ab"></div>
<div class="a" style="left:961.9px;top:4.7px;width:19.2px;height:19.2px;border-radius:50%;overflow:hidden;background:linear-gradient(215deg,#152b45 0%,#1b4668 45%,#2080b4 100%)"><div style="position:absolute;left:8.2px;top:9px;width:3px;height:3.4px;border-radius:50%;background:#d9b8a6"></div><div style="position:absolute;left:7.6px;top:11.8px;width:4.6px;height:9px;background:#8a4a24;border-radius:2px 2px 0 0"></div><div style="position:absolute;left:2.5px;top:14.5px;width:6.5px;height:7px;background:#e8ddd2;border-radius:3px;transform:rotate(-35deg)"></div></div>
<div class="a" style="left:973.5px;top:17px;width:12.5px;height:8.5px;border-radius:4px;background:rgba(232,239,252,.85)"></div>
<div class="t" style="left:979.60px;top:18.90px;font-size:6.2px;font-weight:bold;color:#4f84f0;transform:translateX(-50%);letter-spacing:-0.1px">GV</div>
</body></html>
